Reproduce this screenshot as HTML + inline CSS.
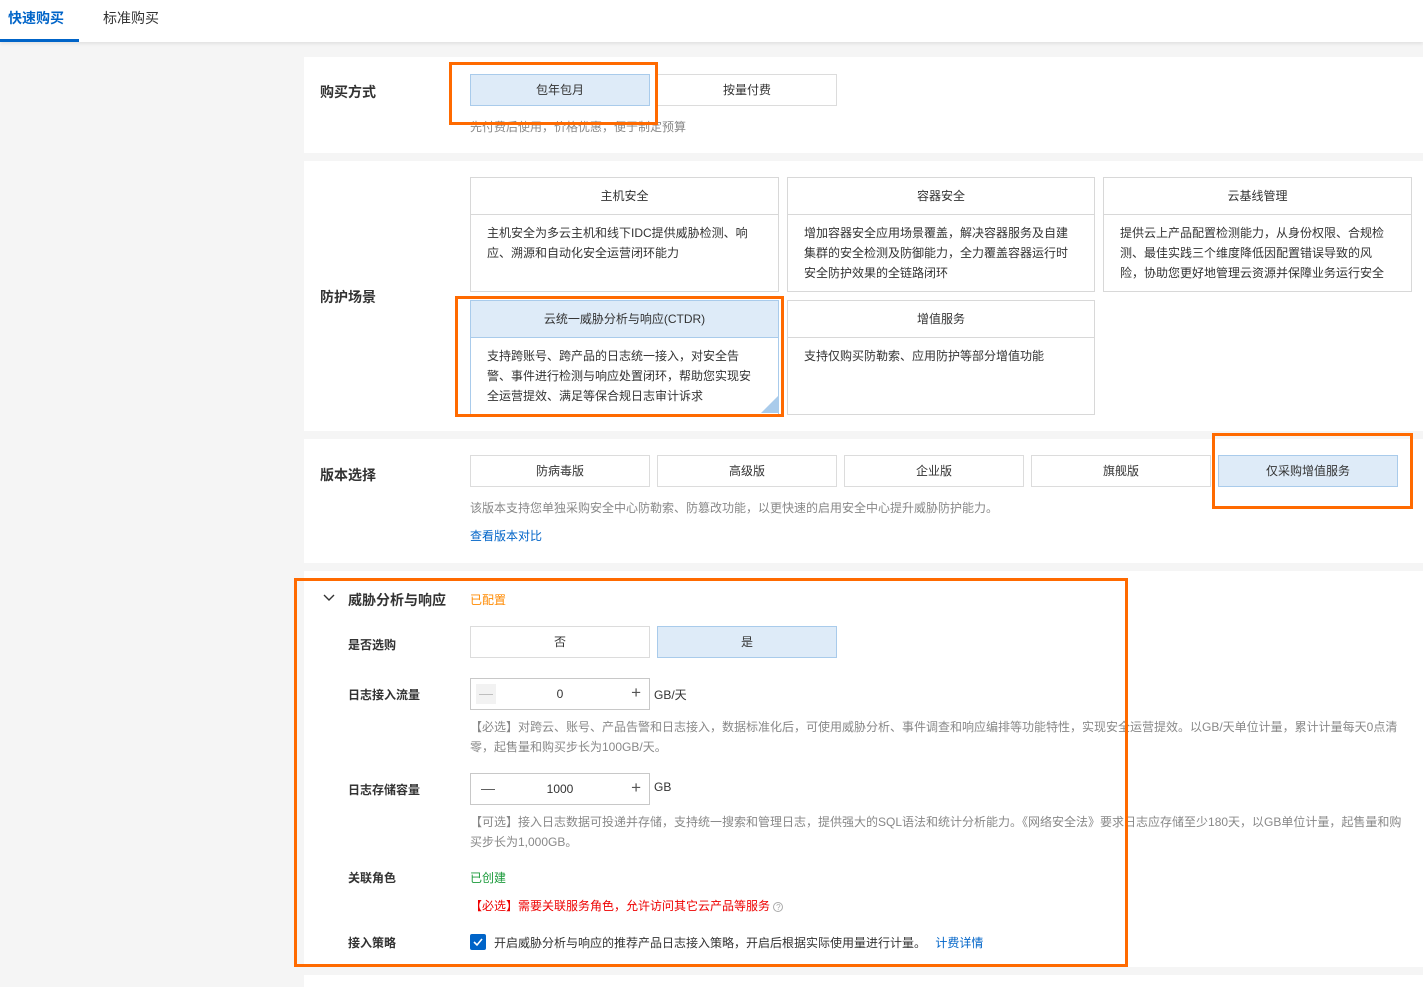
<!DOCTYPE html>
<html><head><meta charset="utf-8"><style>
*{box-sizing:border-box;margin:0;padding:0}
body{width:1423px;height:987px;background:#f5f5f5;font-family:"Liberation Sans","Noto Sans CJK SC",sans-serif;font-size:12px;color:#333;position:relative;overflow:hidden}
.a{position:absolute}
.hdr{left:0;top:0;width:1423px;height:42px;background:#fff;box-shadow:0 2px 3px rgba(0,0,0,.08)}
.panel{left:304px;width:1119px;background:#fff}
.lbl{font-size:14px;font-weight:bold;color:#333}
.sl{font-size:12px;font-weight:bold;color:#333}
.btn{border:1px solid #dcdcdc;background:#fff;text-align:center;font-size:12px;color:#333;height:32px;line-height:30px}
.btn.on{background:#deebf8;border-color:#a9cbeb}
.card{border:1px solid #d8d8d8;background:#fff}
.card .t{height:37px;line-height:36px;text-align:center;border-bottom:1px solid #d8d8d8;font-size:12px}
.card .d{padding:8px 16px;line-height:20px;font-size:12px;color:#333}
.card.on{border-color:#a9cbeb}
.card.on .t{background:#deebf8;border-color:#a9cbeb}
.hint{color:#888;font-size:12px;line-height:20px}
.ob{border:3px solid #ff6a00}
.num{border:1px solid #c8c8c8;width:180px;height:32px;background:#fff}
</style></head><body>
<div class="a hdr"></div>
<div class="a" style="left:8px;top:8px;font-size:14px;font-weight:bold;color:#0064c8">快速购买</div>
<div class="a" style="left:0;top:39px;width:79px;height:3px;background:#0064c8"></div>
<div class="a" style="left:103px;top:8px;font-size:14px;color:#333">标准购买</div>

<div class="a panel" style="top:57px;height:96px"></div>
<div class="a lbl" style="left:320px;top:82px">购买方式</div>
<div class="a btn on" style="left:470px;top:74px;width:180px">包年包月</div>
<div class="a btn" style="left:657px;top:74px;width:180px">按量付费</div>
<div class="a hint" style="left:470px;top:117px">先付费后使用，价格优惠，便于制定预算</div>
<div class="a ob" style="left:449px;top:62px;width:209px;height:63px"></div>

<div class="a panel" style="top:161px;height:270px"></div>
<div class="a lbl" style="left:320px;top:287px">防护场景</div>
<div class="a card" style="left:470px;top:177px;width:309px;height:115px"><div class="t">主机安全</div><div class="d">主机安全为多云主机和线下IDC提供威胁检测、响应、溯源和自动化安全运营闭环能力</div></div>
<div class="a card" style="left:787px;top:177px;width:308px;height:115px"><div class="t">容器安全</div><div class="d">增加容器安全应用场景覆盖，解决容器服务及自建集群的安全检测及防御能力，全力覆盖容器运行时安全防护效果的全链路闭环</div></div>
<div class="a card" style="left:1103px;top:177px;width:309px;height:115px"><div class="t">云基线管理</div><div class="d">提供云上产品配置检测能力，从身份权限、合规检测、最佳实践三个维度降低因配置错误导致的风险，协助您更好地管理云资源并保障业务运行安全</div></div>
<div class="a card on" style="left:470px;top:300px;width:309px;height:115px"><div class="t">云统一威胁分析与响应(CTDR)</div><div class="d">支持跨账号、跨产品的日志统一接入，对安全告警、事件进行检测与响应处置闭环，帮助您实现安全运营提效、满足等保合规日志审计诉求</div></div>
<div class="a" style="left:761px;top:396px;width:0;height:0;border-left:17px solid transparent;border-bottom:17px solid #a9cbeb"></div>
<div class="a card" style="left:787px;top:300px;width:308px;height:115px"><div class="t">增值服务</div><div class="d">支持仅购买防勒索、应用防护等部分增值功能</div></div>
<div class="a ob" style="left:455px;top:296px;width:329px;height:121px"></div>

<div class="a panel" style="top:439px;height:124px"></div>
<div class="a lbl" style="left:320px;top:465px">版本选择</div>
<div class="a btn" style="left:470px;top:455px;width:180px">防病毒版</div>
<div class="a btn" style="left:657px;top:455px;width:180px">高级版</div>
<div class="a btn" style="left:844px;top:455px;width:180px">企业版</div>
<div class="a btn" style="left:1031px;top:455px;width:180px">旗舰版</div>
<div class="a btn on" style="left:1218px;top:455px;width:180px">仅采购增值服务</div>
<div class="a hint" style="left:470px;top:498px">该版本支持您单独采购安全中心防勒索、防篡改功能，以更快速的启用安全中心提升威胁防护能力。</div>
<div class="a" style="left:470px;top:527px;color:#0064c8">查看版本对比</div>
<div class="a ob" style="left:1212px;top:433px;width:201px;height:76px"></div>

<div class="a panel" style="top:571px;height:396px"></div>
<svg class="a" style="left:323px;top:593px" width="12" height="10"><path d="M1 2 L6 7 L11 2" stroke="#333" stroke-width="1.4" fill="none"/></svg>
<div class="a lbl" style="left:348px;top:590px">威胁分析与响应</div>
<div class="a" style="left:470px;top:591px;color:#ff8a00">已配置</div>
<div class="a sl" style="left:348px;top:636px">是否选购</div>
<div class="a btn" style="left:470px;top:626px;width:180px">否</div>
<div class="a btn on" style="left:657px;top:626px;width:180px">是</div>
<div class="a sl" style="left:348px;top:686px">日志接入流量</div>
<div class="a num" style="left:470px;top:678px"><div class="a" style="left:5px;top:5px;width:20px;height:20px;background:#f2f2f2;color:#bbb;text-align:center;line-height:19px;font-size:14px">—</div><div class="a" style="left:0;width:178px;top:8px;text-align:center">0</div><div class="a" style="right:8px;top:4px;font-size:17px;color:#555">+</div></div>
<div class="a" style="left:654px;top:686px">GB/天</div>
<div class="a hint" style="left:470px;top:717px;width:940px">【必选】对跨云、账号、产品告警和日志接入，数据标准化后，可使用威胁分析、事件调查和响应编排等功能特性，实现安全运营提效。以GB/天单位计量，累计计量每天0点清零，起售量和购买步长为100GB/天。</div>
<div class="a sl" style="left:348px;top:781px">日志存储容量</div>
<div class="a num" style="left:470px;top:773px"><div class="a" style="left:10px;top:6px;color:#555;font-size:14px">—</div><div class="a" style="left:0;width:178px;top:8px;text-align:center">1000</div><div class="a" style="right:8px;top:4px;font-size:17px;color:#555">+</div></div>
<div class="a" style="left:654px;top:780px">GB</div>
<div class="a hint" style="left:470px;top:812px;width:940px">【可选】接入日志数据可投递并存储，支持统一搜索和管理日志，提供强大的SQL语法和统计分析能力。《网络安全法》要求日志应存储至少180天，以GB单位计量，起售量和购买步长为1,000GB。</div>
<div class="a sl" style="left:348px;top:869px">关联角色</div>
<div class="a" style="left:470px;top:869px;color:#1a9a3a">已创建</div>
<div class="a" style="left:470px;top:897px;color:#e00">【必选】需要关联服务角色，允许访问其它云产品等服务 <span style="display:inline-block;width:10px;height:10px;border:1px solid #aaa;border-radius:50%;font-size:8px;line-height:9px;text-align:center;color:#aaa">?</span></div>
<div class="a sl" style="left:348px;top:934px">接入策略</div>
<div class="a" style="left:470px;top:934px;width:16px;height:16px;background:#0064c8;border-radius:2px"><svg width="16" height="16"><path d="M4 8 L7 11 L12 5" stroke="#fff" stroke-width="1.6" fill="none"/></svg></div>
<div class="a" style="left:494px;top:934px">开启威胁分析与响应的推荐产品日志接入策略，开启后根据实际使用量进行计量。 <span style="color:#0064c8;margin-left:6px">计费详情</span></div>
<div class="a ob" style="left:294px;top:578px;width:834px;height:389px"></div>

<div class="a panel" style="top:975px;height:12px"></div>
</body></html>
